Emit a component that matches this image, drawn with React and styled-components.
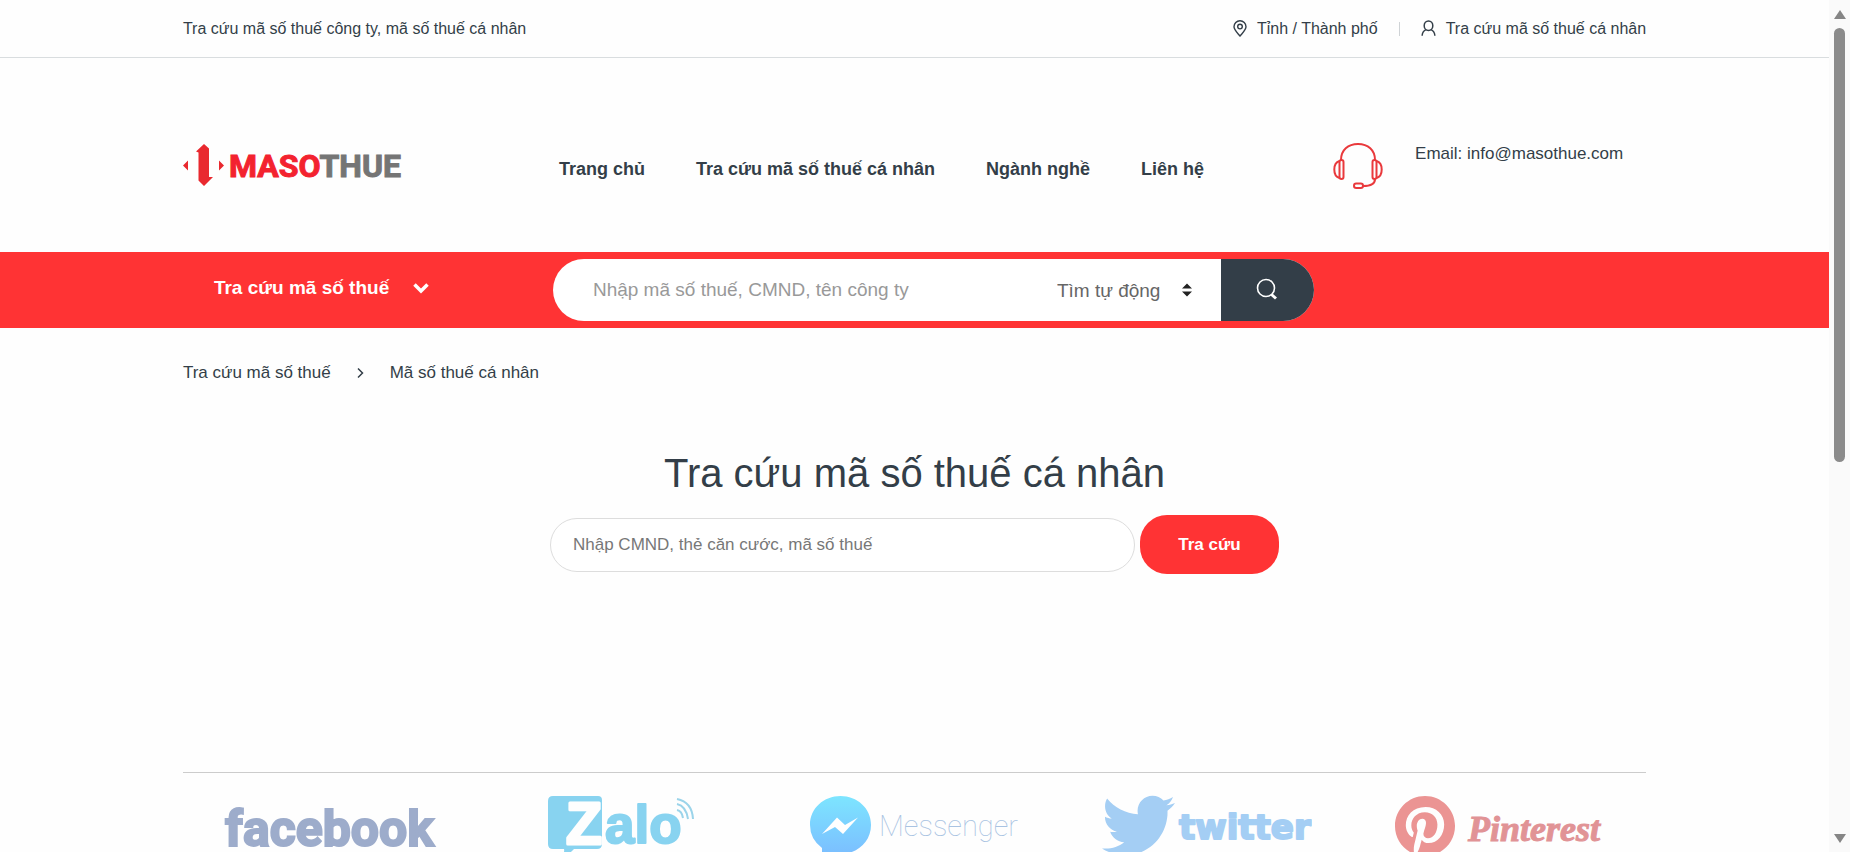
import React from "react";
import styled, { createGlobalStyle } from "styled-components";
import { FaTwitter, FaPinterest } from "react-icons/fa";

const GlobalStyle = createGlobalStyle`
  *, *::before, *::after { box-sizing: border-box; }
  body {
    margin: 0;
    background: #fefefe;
    color: #333e48;
    font-family: "Liberation Sans", Arial, sans-serif;
    font-size: 17px;
    line-height: 24px;
  }
  a { color: inherit; text-decoration: none; }
  button, input, select { font-family: inherit; }
  svg { flex: none; }
`;

const Shell = styled.div`
  display: flex;
  height: 100vh;
  overflow: hidden;
`;

const Page = styled.div`
  flex: 1;
  min-width: 0;
`;

const Container = styled.div`
  width: 80%;
  margin: 0 auto;
`;

const TopBar = styled.div`
  border-bottom: 1px solid #d9dddf;
  font-size: 16px;
`;

const TopBarInner = styled(Container)`
  display: flex;
  align-items: center;
  justify-content: space-between;
  height: 57px;
`;

const TopLinks = styled.nav`
  display: flex;
  align-items: center;
  gap: 21px;
`;

const TopLink = styled.a`
  display: flex;
  align-items: center;
  gap: 10px;
`;

const Divider = styled.span`
  width: 1px;
  height: 14px;
  background: #cfd3d6;
`;

const Header = styled(Container).attrs({ as: "header" })`
  display: flex;
  padding: 84px 0 62px;
`;

const LogoLink = styled.a`
  width: 376px;
  height: 48px;
`;

const MainNav = styled.nav`
  display: flex;
  flex: 1;
  gap: 51px;
  padding-top: 15px;
  font-size: 18px;
  font-weight: 700;
  white-space: nowrap;
`;

const Support = styled.div`
  display: flex;
  gap: 32px;
  width: 313px;
`;

const SearchBar = styled.div`
  background: #ff3334;
`;

const SearchBarInner = styled(Container)`
  display: flex;
  align-items: center;
  height: 76px;
`;

const MenuButton = styled.button`
  display: flex;
  align-items: center;
  gap: 24px;
  width: 370px;
  padding: 0 0 4px 31px;
  border: 0;
  background: none;
  color: #fff;
  font-size: 19px;
  font-weight: 700;
`;

const SearchForm = styled.form`
  display: flex;
  width: 761px;
  height: 62px;
  border-radius: 31px;
  background: #fff;
  overflow: hidden;
`;

const SearchInput = styled.input`
  flex: 1;
  min-width: 0;
  padding: 0 0 0 40px;
  border: 0;
  outline: 0;
  background: none;
  font-size: 19px;
  &::placeholder { color: #999; }
`;

const SelectWrap = styled.div`
  display: flex;
  align-items: center;
  gap: 21px;
  padding-right: 29px;
`;

const Select = styled.select`
  appearance: none;
  padding: 0;
  border: 0;
  background: none;
  color: #666;
  font-size: 19px;
`;

const SearchButton = styled.button`
  display: flex;
  align-items: center;
  justify-content: center;
  width: 93px;
  padding: 0 0 2px;
  border: 0;
  background: #333e48;
`;

const Breadcrumb = styled(Container).attrs({ as: "nav" })`
  display: flex;
  align-items: center;
  gap: 25px;
  padding-top: 33px;
`;

const Lookup = styled.main`
  display: flex;
  flex-direction: column;
  align-items: center;
  padding-top: 64px;
`;

const Title = styled.h1`
  margin: 0;
  font-size: 40px;
  font-weight: 400;
  line-height: 48px;
`;

const LookupForm = styled.form`
  display: flex;
  align-items: center;
  gap: 5px;
  width: 729px;
  padding-top: 18px;
`;

const LookupInput = styled.input`
  flex: 1;
  min-width: 0;
  height: 54px;
  padding: 0 22px;
  border: 1px solid #ddd;
  border-radius: 27px;
  background: #fff;
  font-size: 17px;
  &::placeholder { color: #777; }
`;

const LookupButton = styled.button`
  width: 139px;
  height: 59px;
  border: 0;
  border-radius: 27px;
  background: #ff3334;
  color: #fff;
  font-size: 17px;
  font-weight: 700;
`;

const Brands = styled(Container).attrs({ as: "ul" })`
  display: grid;
  grid-template-columns: repeat(5, 1fr);
  margin-top: 198px;
  padding: 22px 0 24px;
  border-top: 1px solid #ccc;
  list-style: none;
`;

const Brand = styled.li`
  display: flex;
  justify-content: center;
`;

const ScrollTrack = styled.div`
  display: flex;
  flex-direction: column;
  align-items: center;
  gap: 8px;
  width: 21px;
  padding: 10px 0 8px;
  background: #fafafa;
`;

const ScrollThumb = styled.div`
  width: 11px;
  flex: 0 0 52%;
  margin-bottom: auto;
  border-radius: 6px;
  background: #8b8b8b;
`;

function PinIcon() {
  return (
    <svg width="14" height="17" viewBox="0 0 14 17" fill="none" stroke="#333e48" strokeWidth="1.4" aria-hidden="true">
      <path d="M7 16C4 12.500 1 9.800 1 6.800A6 6 0 0 1 13 6.800C13 9.800 10 12.500 7 16Z" />
      <circle cx="7" cy="6.600" r="2.300" />
    </svg>
  );
}

function UserIcon() {
  return (
    <svg width="15" height="17" viewBox="0 0 16 18" fill="none" stroke="#333e48" strokeWidth="1.6" aria-hidden="true">
      <ellipse cx="8" cy="6" rx="4.600" ry="5" />
      <path d="M5.600 10.200C3 11.200 1.400 13 1.200 16.800M10.400 10.200C13 11.200 14.600 13 14.800 16.800" />
    </svg>
  );
}

function MasothueLogo() {
  return (
    <svg width="230" height="48" viewBox="0 0 230 48" role="img" aria-label="Masothue">
      <g fill="#e9292f">
        <path d="M13 9.500 21 2 26 6.500V35H30L21 44 15.500 38.500V10.500Z" />
        <path d="M0 23.500 5 18.500V28.500ZM36 18.500 41 23.500 36 28.500Z" />
      </g>
      <text x="46" y="35" fontFamily="Roboto, sans-serif" fontWeight="700" fontSize="32" strokeWidth="1">
        <tspan fill="#f3222f" stroke="#f3222f">MASO</tspan>
        <tspan fill="#757575" stroke="#757575">THUE</tspan>
      </text>
    </svg>
  );
}

function HeadsetIcon() {
  return (
    <svg width="50" height="48" viewBox="0 0 50 48" fill="none" stroke="#e9393c" strokeWidth="2" aria-hidden="true">
      <path d="M8 18C8 8 15 2 25 2S42 8 42 18" />
      <rect x="6.500" y="18" width="4" height="19" rx="2" />
      <rect x="39.500" y="18" width="4" height="19" rx="2" />
      <path d="M6.500 19C3 20 1.300 23 1.300 27.500S3 35 6.500 36M43.500 19C47 20 48.700 23 48.700 27.500S47 35 43.500 36" />
      <path d="M42 37C42 42 38 44 30 44" />
      <rect x="21" y="41.500" width="9" height="4.500" rx="2.200" />
    </svg>
  );
}

function FacebookLogo() {
  return (
    <svg width="220" height="62" viewBox="0 0 220 62" role="img" aria-label="facebook">
      <text x="6" y="51" fill="#9daccb" stroke="#9daccb" strokeWidth="2" fontFamily="Roboto, sans-serif" fontWeight="700" fontSize="50">facebook</text>
    </svg>
  );
}

function ZaloLogo() {
  return (
    <svg width="147" height="62" viewBox="0 0 147 62" role="img" aria-label="Zalo">
      <path d="M5 1H50Q54 1 54 5V49Q54 54 49 54H26Q21 60 13 61Q17 58 16 54H5Q0 54 0 49V6Q0 1 5 1Z" fill="#88d3f0" />
      <g fontFamily="'Liberation Sans', sans-serif" fontWeight="700" strokeLinejoin="round">
        <text x="18" y="49" fontSize="59" fill="#fefefe" stroke="#fefefe" strokeWidth="3">Z</text>
        <text x="57" y="48" fontSize="53" fill="#88d3f0" stroke="#88d3f0" strokeWidth="2">alo</text>
      </g>
      <g fill="none" stroke="#9bd4ea" strokeWidth="2">
        <path d="M129 4Q144 7 145 24" />
        <path d="M129 9Q138 11 140 24" />
        <path d="M129 15Q134 16 135 23" />
      </g>
    </svg>
  );
}

function MessengerLogo() {
  return (
    <svg width="212" height="64" viewBox="0 0 212 64" role="img" aria-label="Messenger">
      <defs>
        <linearGradient id="bubble" x1="0" y1="0" x2="0" y2="1">
          <stop offset="0" stopColor="#7de5ff" />
          <stop offset="1" stopColor="#7bbcff" />
        </linearGradient>
      </defs>
      <path d="M32.500 1C49 1 63 13 63 30S49 59 32.500 59Q27 59 23 57.500L14 63V53Q2 44 2 30C2 13 16 1 32.500 1Z" fill="url(#bubble)" />
      <path d="M14 39 29 22.500 37 30 50 22.500 35 39 27 32Z" fill="#fff" />
      <text x="71" y="41" fill="#a9c3e2" fontFamily="Roboto, Inter, sans-serif" fontWeight="100" fontSize="29">Messenger</text>
    </svg>
  );
}

function TwitterLogo() {
  return (
    <svg width="210" height="62" viewBox="0 0 210 62" role="img" aria-label="twitter">
      <FaTwitter x="0" y="-6" size="73" color="#a4cef4" />
      <text x="77" y="44" fill="#a4cef4" stroke="#a4cef4" strokeWidth="2" strokeLinejoin="round" fontFamily="'DejaVu Sans', sans-serif" fontWeight="700" fontSize="34">twitter</text>
    </svg>
  );
}

function PinterestLogo() {
  return (
    <svg width="212" height="63" viewBox="0 0 212 63" role="img" aria-label="Pinterest">
      <FaPinterest x="0" y="0" size="62" color="#eb9493" />
      <text x="74" y="46" fill="#e19396" stroke="#e19396" fontFamily="'Liberation Serif', serif" fontStyle="italic" fontWeight="700" fontSize="36">Pinterest</text>
    </svg>
  );
}

const navItems = ["Trang chủ", "Tra cứu mã số thuế cá nhân", "Ngành nghề", "Liên hệ"];
const brands = [FacebookLogo, ZaloLogo, MessengerLogo, TwitterLogo, PinterestLogo];

export default function App() {
  return (
    <Shell>
      <GlobalStyle />
      <Page>
        <TopBar>
          <TopBarInner>
            <a href="#home">Tra cứu mã số thuế công ty, mã số thuế cá nhân</a>
            <TopLinks>
              <TopLink href="#provinces">
                <PinIcon />
                Tỉnh / Thành phố
              </TopLink>
              <Divider />
              <TopLink href="#personal">
                <UserIcon />
                Tra cứu mã số thuế cá nhân
              </TopLink>
            </TopLinks>
          </TopBarInner>
        </TopBar>

        <Header>
          <LogoLink href="#home">
            <MasothueLogo />
          </LogoLink>
          <MainNav>
            {navItems.map((item) => (
              <a key={item} href="#nav">{item}</a>
            ))}
          </MainNav>
          <Support>
            <HeadsetIcon />
            <a href="mailto:info@masothue.com">Email: info@masothue.com</a>
          </Support>
        </Header>

        <SearchBar>
          <SearchBarInner>
            <MenuButton type="button">
              Tra cứu mã số thuế
              <svg width="16" height="12" viewBox="0 0 16 12" fill="none" stroke="#fff" strokeWidth="3.500" aria-hidden="true">
                <path d="M1.500 2.500 8 9 14.500 2.500" />
              </svg>
            </MenuButton>
            <SearchForm onSubmit={(e) => e.preventDefault()}>
              <SearchInput type="text" aria-label="Tìm kiếm" placeholder="Nhập mã số thuế, CMND, tên công ty" />
              <SelectWrap>
                <Select aria-label="Loại tìm kiếm">
                  <option>Tìm tự động</option>
                </Select>
                <svg width="10" height="14" viewBox="0 0 10 14" fill="#222" aria-hidden="true">
                  <path d="M0 5.500 5 0.500 10 5.500ZM0 8.500H10L5 13.500Z" />
                </svg>
              </SelectWrap>
              <SearchButton type="submit" aria-label="Tìm">
                <svg width="22" height="22" viewBox="0 0 22 22" fill="none" stroke="#fff" aria-hidden="true">
                  <circle cx="10" cy="10" r="8.500" strokeWidth="1.600" />
                  <path d="M15.500 16.500 20 20.500" strokeWidth="3" />
                </svg>
              </SearchButton>
            </SearchForm>
          </SearchBarInner>
        </SearchBar>

        <Breadcrumb aria-label="Breadcrumb">
          <a href="#home">Tra cứu mã số thuế</a>
          <svg width="9" height="12" viewBox="0 0 9 12" fill="none" stroke="#333e48" strokeWidth="1.500" aria-hidden="true">
            <path d="M2 1.500 6.500 6 2 10.500" />
          </svg>
          <span>Mã số thuế cá nhân</span>
        </Breadcrumb>

        <Lookup>
          <Title>Tra cứu mã số thuế cá nhân</Title>
          <LookupForm onSubmit={(e) => e.preventDefault()}>
            <LookupInput type="text" aria-label="Mã số thuế cá nhân" placeholder="Nhập CMND, thẻ căn cước, mã số thuế" />
            <LookupButton type="submit">Tra cứu</LookupButton>
          </LookupForm>
        </Lookup>

        <Brands>
          {brands.map((Logo, i) => (
            <Brand key={i}>
              <Logo />
            </Brand>
          ))}
        </Brands>
      </Page>
      <ScrollTrack aria-hidden="true">
        <svg width="12" height="10" viewBox="0 0 12 10" fill="#858585">
          <path d="M6 0 12 9H0Z" />
        </svg>
        <ScrollThumb />
        <svg width="12" height="10" viewBox="0 0 12 10" fill="#858585">
          <path d="M0 0H12L6 9Z" />
        </svg>
      </ScrollTrack>
    </Shell>
  );
}
